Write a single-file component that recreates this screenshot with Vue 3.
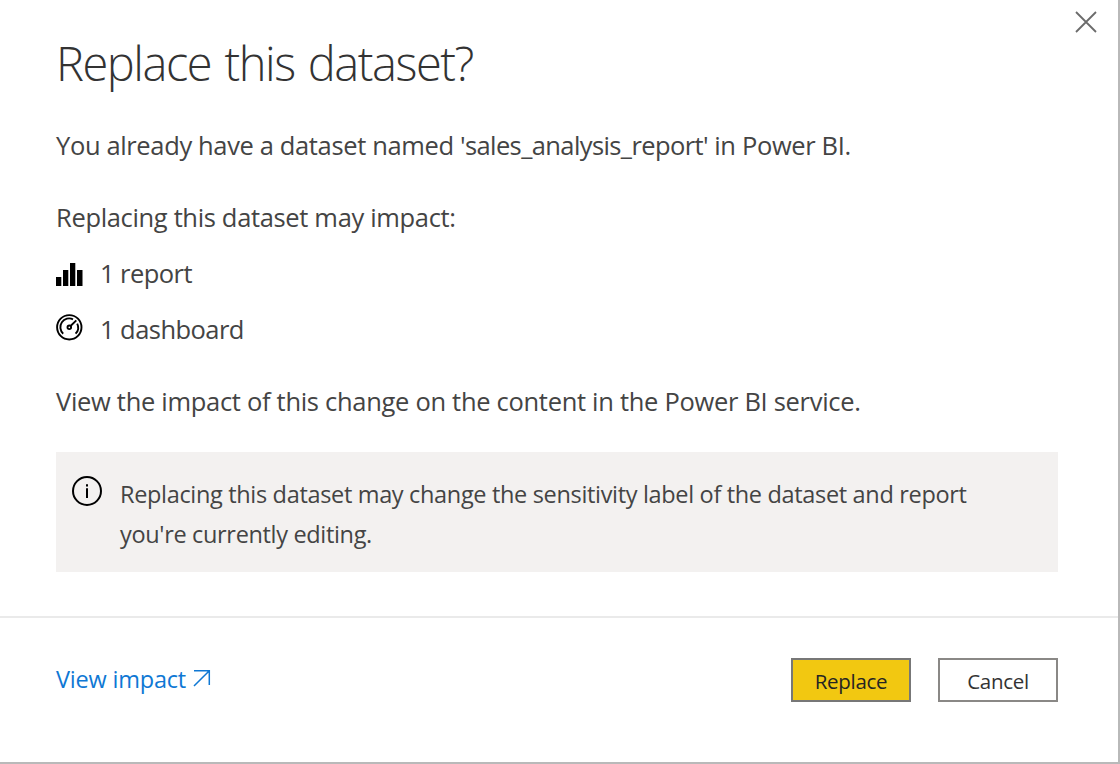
<script setup>
</script>

<template>
  <div class="dialog">
    <button class="close" aria-label="Close">
      <svg viewBox="0 0 22 22"><path d="M1 1 21 21M21 1 1 21" /></svg>
    </button>
    <main class="body">
      <h1>Replace this dataset?</h1>
      <p class="named">You already have a dataset named <span class="name">'sales_analysis_report'</span> in Power BI.</p>
      <p class="may">Replacing this dataset may impact:</p>
      <ul class="impacts">
        <li>
          <svg class="bars" viewBox="0 0 27 23"><path d="M0 14h5.3v9H0zM7 7h5.3v16H7zM14 0h5.3v23H14zM21 7h5.5v16H21z" /></svg>
          <span>1 report</span>
        </li>
        <li>
          <svg class="gauge" viewBox="0 0 27 27">
            <circle cx="13.3" cy="13.3" r="12.2" />
            <path d="M7.2 19.7A8.8 8.8 0 0 1 17 5.3M21.2 9.6A8.8 8.8 0 0 1 19.6 19.7M14.8 11.8 20.3 6.4" />
            <circle cx="13.3" cy="13.3" r="1.8" />
          </svg>
          <span>1 dashboard</span>
        </li>
      </ul>
      <p class="view">View the impact of this change on the content in the Power BI service.</p>
      <section class="note">
        <svg class="info" viewBox="0 0 30 30">
          <circle cx="15" cy="15" r="14" />
          <path d="M15 12.2V22M15 8.2v2.2" />
        </svg>
        <p>Replacing this dataset may change the sensitivity label of the dataset and report<br>you're currently editing.</p>
      </section>
    </main>
    <footer class="footer">
      <a class="link"><span>View impact</span>
        <svg viewBox="0 0 18 18"><path d="M1 1.7h15.3V16M16.3 1.7 1 17" /></svg>
      </a>
      <div class="actions">
        <button class="btn primary">Replace</button>
        <button class="btn">Cancel</button>
      </div>
    </footer>
  </div>
</template>

<style>
body { overflow: hidden; }
</style>

<style scoped>
.dialog {
  position: relative;
  box-sizing: border-box;
  width: 1120px;
  height: 764px;
  background: #fff;
  border-right: 2px solid #b9b9b9;
  border-bottom: 2px solid #b9b9b9;
  font-family: "Open Sans", "Noto Sans", sans-serif;
  color: #444;
  display: flex;
  flex-direction: column;
  white-space: nowrap;
}
.close {
  position: absolute;
  top: 11px;
  right: 21px;
  width: 22px;
  height: 22px;
  padding: 0;
  border: 0;
  background: none;
}
.close svg { display: block; width: 22px; height: 22px; stroke: #6b6b6b; stroke-width: 1.8; }
.body { box-sizing: border-box; height: 616px; padding: 30px 60px 0 56px; }
h1 { margin: 0; font-size: 47px; line-height: 66px; font-weight: 300; letter-spacing: -1.46px; word-spacing: 2.5px; color: #333; }
p { margin: 0; font-size: 25.5px; line-height: 36px; }
.named { margin-top: 31px; letter-spacing: -0.36px; }
.name { letter-spacing: -0.6px; }
.may { margin-top: 36px; letter-spacing: -0.34px; }
.impacts { list-style: none; margin: 11px 0 0; padding: 0; font-size: 25.5px; letter-spacing: -0.55px; }
.impacts li { display: flex; align-items: center; height: 56px; }
.impacts span { margin: -2px 0 0 17px; }
.bars { width: 27px; height: 23px; fill: #000; }
.gauge { width: 27px; height: 27px; margin-top: -6px; fill: none; stroke: #000; stroke-width: 1.9; }
.view { margin-top: 25px; letter-spacing: -0.3px; }
.note {
  display: flex;
  align-items: flex-start;
  box-sizing: border-box;
  height: 120px;
  margin-top: 33px;
  padding: 21px 16px;
  background: #f3f1f0;
}
.info { width: 30px; height: 30px; margin-top: 3px; margin-right: 18px; fill: none; stroke: #000; stroke-width: 2; }
.note p { margin-top: 1px; font-size: 23.5px; line-height: 40px; letter-spacing: -0.33px; }
.footer {
  flex: 1;
  display: flex;
  justify-content: space-between;
  align-items: flex-start;
  border-top: 2px solid #eaeaea;
  padding: 40px 60px 0 56px;
}
.link { display: flex; align-items: center; height: 44px; margin-top: -1px; font-size: 23.5px; letter-spacing: -0.2px; color: #0f78d4; }
.link svg { width: 18px; height: 18px; margin: -3px 0 0 7px; fill: none; stroke: #0f78d4; stroke-width: 1.5; }
.actions { display: flex; gap: 27px; }
.btn {
  box-sizing: border-box;
  width: 120px;
  height: 44px;
  padding: 2px 0 0;
  border: 2px solid #8a8886;
  background: #fff;
  font: 20.5px "Open Sans", "Noto Sans", sans-serif;
  letter-spacing: -0.3px;
  color: #333;
}
.primary { background: #f2c811; border-color: #777; color: #252423; }
</style>
